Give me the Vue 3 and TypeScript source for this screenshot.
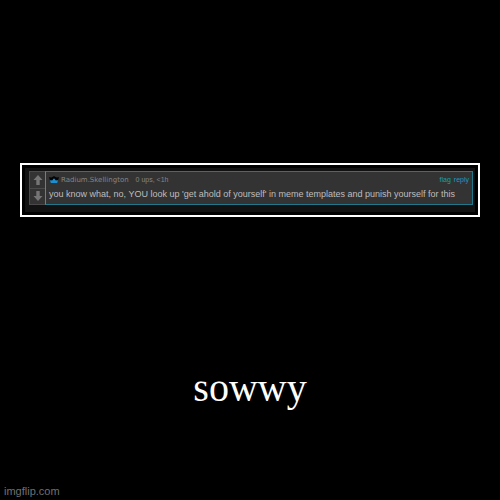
<script setup lang="ts">
interface Comment {
  author: string
  meta: string
  text: string
}

const comment: Comment = {
  author: 'Radium.Skellington',
  meta: '0 ups, <1h',
  text: "you know what, no, YOU look up 'get ahold of yourself' in meme templates and punish yourself for this",
}
</script>

<template>
  <main class="poster">
    <section class="frame">
      <div class="panel">
        <article class="comment">
          <div class="votes">
            <button class="vote" type="button" aria-label="Upvote">
              <svg viewBox="0 0 10 10"><path d="M5 0 L9.5 5 H6.7 V10 H3.3 V5 H0.5 Z" /></svg>
            </button>
            <button class="vote" type="button" aria-label="Downvote">
              <svg viewBox="0 0 10 10"><path d="M5 10 L9.5 5 H6.7 V0 H3.3 V5 H0.5 Z" /></svg>
            </button>
          </div>
          <div class="body">
            <header class="head">
              <svg class="crown" viewBox="0 0 10 8">
                <path class="crown-back" d="M0 1 L2 1.6 L3.5 1 L5 0 L6.5 1 L8 1.6 L10 1 L9 4.5 H1 Z" />
                <path class="crown-front" d="M1 4.2 L3.2 4.4 L5 2.2 L6.8 4.4 L9 4.2 L8.2 7 H1.8 Z" />
              </svg>
              <a class="author" href="#">{{ comment.author }}</a>
              <span class="meta">{{ comment.meta }}</span>
              <nav class="actions">
                <a href="#">flag</a>
                <a href="#">reply</a>
              </nav>
            </header>
            <p class="text">{{ comment.text }}</p>
          </div>
        </article>
      </div>
    </section>
    <h1 class="title">sowwy</h1>
    <footer class="credit">imgflip.com</footer>
  </main>
</template>

<style>
body {
  margin: 0;
  background: #000;
}
</style>

<style scoped>
.poster {
  box-sizing: border-box;
  display: flex;
  flex-direction: column;
  min-height: 100vh;
  padding: 163px 20px 0;
  background: #000;
  font-family: "Liberation Sans", Arial, sans-serif;
}

.frame {
  padding: 3px;
  border: 2px solid #fff;
}

.panel {
  padding: 3px 2px 7px 4px;
  background: #111;
}

.comment {
  display: flex;
}

.votes {
  display: grid;
  grid-template-rows: 1fr 1fr;
  gap: 1px;
  width: 16px;
  box-sizing: border-box;
  padding: 1px 0 1px 1px;
  background: #4a4a4a;
}

.vote {
  display: flex;
  align-items: center;
  justify-content: center;
  padding: 0;
  border: 0;
  background: #333;
}

.vote svg {
  width: 10px;
  height: 10px;
  fill: #757575;
}

.body {
  flex: 1;
  min-width: 0;
  padding: 3px 3px 4px;
  border: 1px solid #22788a;
  border-left-color: #2a9ab4;
  background: #333;
}

.head {
  display: flex;
  align-items: center;
  height: 10px;
  font-size: 7px;
  line-height: 10px;
  white-space: nowrap;
}

.crown {
  width: 10px;
  height: 8px;
  margin-right: 2px;
}

.crown-back {
  fill: #050505;
}

.crown-front {
  fill: #1b8fd0;
}

.author {
  margin-right: 7px;
  color: #858585;
  font-family: "DejaVu Sans", sans-serif;
  text-decoration: none;
}

.meta {
  color: #858585;
}

.actions {
  display: flex;
  gap: 3px;
  margin-left: auto;
}

.actions a {
  color: #1a9cba;
  text-decoration: none;
}

.text {
  margin: 3px 0 0;
  color: #bebebe;
  font-size: 9px;
  line-height: 12px;
  white-space: nowrap;
}

.title {
  margin: 148px 0 0;
  color: #fff;
  font: 400 40px/46px "Liberation Serif", "Times New Roman", serif;
  text-align: center;
}

.credit {
  margin: auto 0 2px -16px;
  color: #707070;
  font-size: 11px;
  line-height: 13px;
}
</style>
